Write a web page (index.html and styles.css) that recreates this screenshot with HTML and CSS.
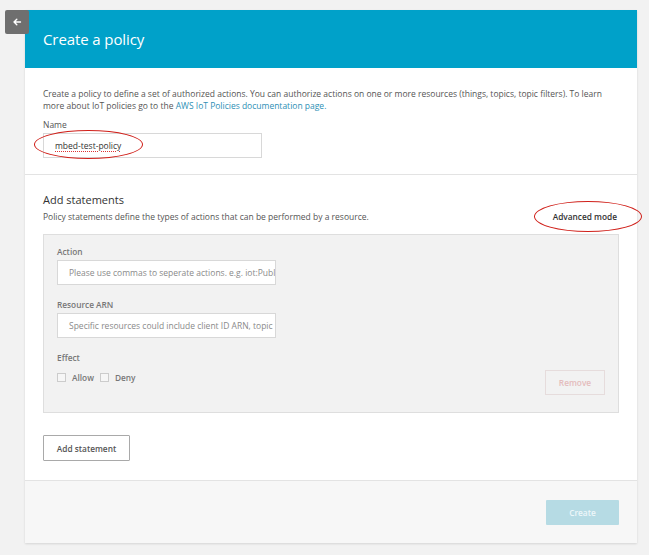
FILE: index.html
```html
<!DOCTYPE html>
<html>
<head>
<meta charset="utf-8">
<link rel="stylesheet" href="styles.css">
</head>
<body>
<div class="page">
  <button class="back" aria-label="Back">
    <svg width="10" height="10" viewBox="0 0 10 10"><path d="M8.5 5H2M4.8 2.2L2 5l2.8 2.8" fill="none" stroke="#fff" stroke-width="1.4" stroke-linecap="round" stroke-linejoin="round"/></svg>
  </button>
  <div class="card">
    <div class="header"><h1>Create a policy</h1></div>
    <div class="section intro">
      <p class="desc intro-desc">Create a policy to define a set of authorized actions. You can authorize actions on one or more resources (things, topics, topic filters). To learn more about IoT policies go to the <a href="#">AWS IoT Policies documentation page.</a></p>
      <label class="lbl">Name</label>
      <div class="name-wrap">
        <div class="input name-input"><span class="spell">mbed-test-policy</span></div>
        <span class="ring ring-name"></span>
      </div>
    </div>
    <div class="section statements">
      <h2>Add statements</h2>
      <div class="subrow">
        <p class="desc">Policy statements define the types of actions that can be performed by a resource.</p>
        <div class="adv-wrap">
          <a class="adv" href="#">Advanced mode</a>
          <span class="ring ring-adv"></span>
        </div>
      </div>
      <div class="stmt">
        <label class="blbl">Action</label>
        <div class="input ph">Please use commas to seperate actions. e.g. iot:Publi</div>
        <label class="blbl">Resource ARN</label>
        <div class="input ph">Specific resources could include client ID ARN, topic</div>
        <label class="blbl">Effect</label>
        <div class="effect-row">
          <div class="checks">
            <span class="cb"></span><span class="cbl">Allow</span>
            <span class="cb"></span><span class="cbl">Deny</span>
          </div>
          <button class="remove">Remove</button>
        </div>
      </div>
      <button class="add">Add statement</button>
    </div>
    <div class="footer">
      <button class="create">Create</button>
    </div>
  </div>
</div>
</body>
</html>
```

FILE: styles.css
```css
* { box-sizing: border-box; }
html, body { margin: 0; padding: 0; }
body {
  background: #f2f2f2;
  font-family: "Open Sans", "Noto Sans", "Liberation Sans", sans-serif;
  color: #444;
  width: 649px;
  height: 555px;
  overflow: hidden;
}
.page {
  position: relative;
  padding: 10px 12px 12px 25px;
}
.back {
  position: absolute;
  left: 5px;
  top: 10px;
  width: 24px;
  height: 24px;
  border: 0;
  border-radius: 2px;
  background: #6f6f6f;
  padding: 0;
  display: flex;
  align-items: center;
  justify-content: center;
}
.card {
  width: 612px;
  background: #fff;
  box-shadow: 0 1px 2px rgba(0,0,0,0.12);
}
.header {
  height: 58px;
  background: #00a1c9;
  display: flex;
  align-items: center;
  padding-left: 18px;
}
.header h1 {
  margin: 0;
  color: #fff;
  font-weight: 400;
  font-size: 15px;
  letter-spacing: -0.1px;
}
.section { padding: 0 18px; }
.intro {
  padding-top: 20px;
  padding-bottom: 16px;
  border-bottom: 1px solid #e3e3e3;
}
.desc {
  margin: 0;
  font-size: 8.5px;
  line-height: 12px;
  color: #555;
}
.intro-desc { max-width: 566px; }
.desc a { color: #2d8fb5; text-decoration: none; }
.lbl {
  display: block;
  margin-top: 7px;
  font-size: 8.5px;
  line-height: 12px;
  color: #555;
}
.name-wrap { position: relative; width: 219px; margin-top: 2px; }
.input {
  width: 219px;
  height: 25px;
  border: 1px solid #d8d8d8;
  background: #fff;
  font-size: 8.5px;
  display: flex;
  align-items: center;
  padding-left: 11px;
  color: #333;
  white-space: nowrap;
  overflow: hidden;
}
.spell {
  text-decoration: underline dotted #d33;
  text-underline-offset: 2px;
}
.ring {
  position: absolute;
  border: 1.3px solid #d0201a;
  border-radius: 50%;
  pointer-events: none;
}
.ring-name { left: -9px; top: -3px; width: 109px; height: 29px; }
.statements { padding-top: 18px; padding-bottom: 19px; }
.statements h2 {
  margin: 0;
  font-weight: 400;
  font-size: 11px;
  line-height: 14px;
  color: #333;
}
.subrow {
  display: flex;
  justify-content: space-between;
  align-items: center;
  margin-top: 4px;
  font-size: 8.5px;
  line-height: 12px;
}
.adv-wrap { position: relative; margin-right: 2px; line-height: 12px; }
.adv {
  font-size: 8.3px;
  font-weight: 600;
  color: #333;
  text-decoration: none;
}
.ring-adv { left: -19px; top: -10px; width: 108px; height: 31px; }
.stmt {
  margin-top: 11px;
  background: #f2f2f2;
  border: 1px solid #dedede;
  padding: 11px 13px 17px 13px;
}
.blbl {
  display: block;
  font-size: 8.3px;
  font-weight: 600;
  color: #777;
  line-height: 12px;
  margin-bottom: 2px;
}
.stmt .input { height: 25px; margin-bottom: 14px; }
.ph { color: #8a8a8a; }
.effect-row {
  display: flex;
  justify-content: space-between;
  align-items: flex-start;
  margin-top: 5px;
}
.checks {
  display: flex;
  align-items: center;
  margin-top: 3px;
}
.cb {
  width: 9px;
  height: 9px;
  border: 1px solid #ccc;
  background: #f6f6f6;
  margin-right: 6px;
}
.cbl {
  font-size: 8.3px;
  font-weight: 600;
  color: #777;
  margin-right: 6px;
}
.remove {
  margin-top: 1px;
  width: 60px;
  height: 25px;
  background: transparent;
  border: 1px solid #e6dcdc;
  color: #e4bcbc;
  font-family: inherit;
  font-size: 8.3px;
  font-weight: 600;
  padding: 0;
}
.add {
  margin-top: 22px;
  width: 87px;
  height: 26px;
  background: #fff;
  border: 1px solid #a9a9a9;
  border-radius: 1px;
  font-family: inherit;
  font-size: 8.3px;
  font-weight: 600;
  color: #555;
  padding: 0;
}
.footer {
  height: 63px;
  background: #f7f7f7;
  border-top: 1px solid #e3e3e3;
  display: flex;
  justify-content: flex-end;
  align-items: flex-start;
  padding: 19px 18px 0 0;
}
.create {
  width: 73px;
  height: 25px;
  border: 0;
  border-radius: 1px;
  background: #b6dbe4;
  color: #eef7fa;
  font-family: inherit;
  font-size: 8.3px;
  font-weight: 600;
  padding: 0;
}
```
